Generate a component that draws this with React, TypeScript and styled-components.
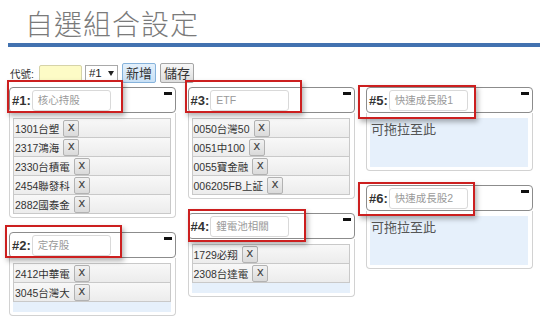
import styled, { createGlobalStyle } from "styled-components";

const GlobalStyle = createGlobalStyle`
  body {
    margin: 0;
    background: #fff;
    font-family: "Liberation Sans", "Noto Sans CJK TC", sans-serif;
  }
  * { box-sizing: border-box; }
`;

const Page = styled.div`
  width: 540px;
  height: 325px;
  overflow: hidden;
`;

const TitleBar = styled.div`
  margin-left: 8px;
  height: 47px;
  padding: 3px 0 0 17px;
  border-bottom: 4px solid #4272b0;
`;

const Title = styled.h1`
  margin: 0;
  font-family: "Noto Sans CJK TC", sans-serif;
  font-weight: 300;
  font-size: 28px;
  line-height: 40px;
  letter-spacing: 1px;
  color: #7a7a7a;
`;

const Toolbar = styled.div`
  display: flex;
  align-items: center;
  height: 22px;
  margin: 15px 0 0 10px;
`;

const Label = styled.span`
  font-size: 10.5px;
  color: #333;
  margin-right: 5px;
`;

const CodeInput = styled.div`
  width: 43px;
  height: 17px;
  background: #fdfbc6;
  border: 1px solid #d6d3a8;
  border-radius: 2px;
  margin-right: 3px;
`;

const FakeSelect = styled.div`
  display: flex;
  align-items: center;
  justify-content: space-between;
  width: 33px;
  height: 17px;
  padding: 0 3px;
  border: 1px solid #a9a9a9;
  background: #fff;
  font-size: 11.5px;
  color: #222;
  margin-right: 4px;
`;

const Button = styled.button<{ $primary?: boolean }>`
  height: 20px;
  width: 34px;
  padding: 0;
  margin-right: 4px;
  font-family: "Noto Sans CJK TC", sans-serif;
  font-size: 13px;
  line-height: 18px;
  color: #333;
  border-radius: 2px;
  border: 1px solid ${(p) => (p.$primary ? "#86b3dc" : "#a5a5a5")};
  background: ${(p) =>
    p.$primary
      ? "linear-gradient(#e3f0fb, #c9e0f5)"
      : "linear-gradient(#f7f7f7, #dedede)"};
`;

const Columns = styled.div`
  display: grid;
  grid-template-columns: 167px 167px 167px;
  column-gap: 11.5px;
  margin: 3px 0 0 9px;
  align-items: start;
`;

const Column = styled.div`
  display: flex;
  flex-direction: column;
  gap: 14px;
`;

const PanelHeader = styled.div`
  position: relative;
  display: flex;
  align-items: center;
  height: 26px;
  padding: 0 3px 0 2px;
  border: 1px solid #8c8c8c;
  border-radius: 4px;
  background: #fff;
`;

const GroupNo = styled.span`
  font-weight: bold;
  font-size: 13px;
  color: #333;
  margin-right: 1px;
`;

const GroupName = styled.div`
  width: 79px;
  height: 21px;
  padding-left: 5px;
  border: 1px solid #d9d9d9;
  border-radius: 3px;
  font-size: 10.5px;
  line-height: 19px;
  color: #9a9a9a;
`;

const Collapse = styled.span`
  align-self: flex-start;
  margin: 4px 0 0 auto;
  width: 8px;
  height: 3px;
  background: #111;
`;

const Highlight = styled.div`
  position: absolute;
  border: 2px solid #cc1f1f;
  box-shadow: 2px 3px 5px rgba(0, 0, 0, 0.3);
  pointer-events: none;
`;

const PanelBody = styled.div`
  padding: 5px 4px 3px 3px;
  border: 1px solid #d2d2d2;
  border-top: none;
  border-radius: 0 0 4px 4px;
`;

const StockList = styled.div`
  min-height: 49px;
  background: #e6f0fb;
`;

const StockItem = styled.div`
  display: flex;
  align-items: center;
  height: 20px;
  padding-left: 1px;
  border: 1px solid #c9c9c9;
  background: linear-gradient(#f8f8f8, #ececec);
  font-size: 10.5px;
  color: #333;

  & + & {
    margin-top: -1px;
  }
`;

const RemoveButton = styled.span`
  display: flex;
  align-items: center;
  justify-content: center;
  width: 16px;
  height: 17px;
  margin-left: 4px;
  padding-bottom: 2px;
  border: 1px solid #b2b2b2;
  border-radius: 2px;
  background: linear-gradient(#f2f2f2, #dadada);
  font-family: "DejaVu Sans", sans-serif;
  font-size: 12px;
  color: #444;
`;

const DropHint = styled.div`
  padding: 2px 2px 0 1px;
  font-family: "Noto Sans CJK TC", sans-serif;
  font-size: 13px;
  line-height: 17px;
  color: #555;
`;

type Box = { left: number; top: number; width: number; height: number };

type Group = {
  no: number;
  name: string;
  stocks: string[];
  mark: Box;
};

const columns: Group[][] = [
  [
    {
      no: 1,
      name: "核心持股",
      stocks: ["1301台塑", "2317鴻海", "2330台積電", "2454聯發科", "2882國泰金"],
      mark: { left: -3, top: -8, width: 116, height: 33 },
    },
    {
      no: 2,
      name: "定存股",
      stocks: ["2412中華電", "3045台灣大"],
      mark: { left: -5, top: -8, width: 117, height: 33 },
    },
  ],
  [
    {
      no: 3,
      name: "ETF",
      stocks: ["0050台灣50", "0051中100", "0055寶金融", "006205FB上証"],
      mark: { left: -4, top: -8, width: 117, height: 33 },
    },
    {
      no: 4,
      name: "鋰電池相關",
      stocks: ["1729必翔", "2308台達電"],
      mark: { left: -1, top: -5, width: 118, height: 33 },
    },
  ],
  [
    {
      no: 5,
      name: "快速成長股1",
      stocks: [],
      mark: { left: -9, top: -3, width: 118, height: 34 },
    },
    {
      no: 6,
      name: "快速成長股2",
      stocks: [],
      mark: { left: -9, top: -4, width: 117, height: 34 },
    },
  ],
];

function Panel({ group }: { group: Group }) {
  return (
    <div>
      <PanelHeader>
        <GroupNo>#{group.no}:</GroupNo>
        <GroupName>{group.name}</GroupName>
        <Collapse />
        <Highlight
          style={{
            left: group.mark.left,
            top: group.mark.top,
            width: group.mark.width,
            height: group.mark.height,
          }}
        />
      </PanelHeader>
      <PanelBody>
        <StockList>
          {group.stocks.length === 0 && <DropHint>可拖拉至此</DropHint>}
          {group.stocks.map((s) => (
            <StockItem key={s}>
              {s}
              <RemoveButton>x</RemoveButton>
            </StockItem>
          ))}
        </StockList>
      </PanelBody>
    </div>
  );
}

export default function App() {
  return (
    <Page>
      <GlobalStyle />
      <TitleBar>
        <Title>自選組合設定</Title>
      </TitleBar>
      <Toolbar>
        <Label>代號:</Label>
        <CodeInput />
        <FakeSelect>
          #1
          <svg width="6" height="5" viewBox="0 0 6 5">
            <path d="M0 0 L6 0 L3 5 Z" fill="#222" />
          </svg>
        </FakeSelect>
        <Button $primary>新增</Button>
        <Button>儲存</Button>
      </Toolbar>
      <Columns>
        {columns.map((col, i) => (
          <Column key={i}>
            {col.map((g) => (
              <Panel key={g.no} group={g} />
            ))}
          </Column>
        ))}
      </Columns>
    </Page>
  );
}
